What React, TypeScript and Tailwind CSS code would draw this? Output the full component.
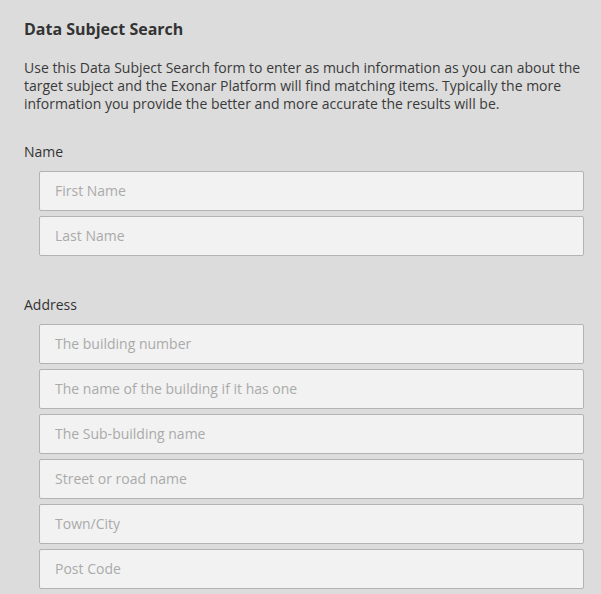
import React from "react";

const inputCls =
  "block w-full h-[40px] rounded-[2px] border border-[#b3b3b3] bg-[#f2f2f2] pl-[15px] pb-[2px] text-[14px] text-[#555] placeholder:text-[#aaaaaa] outline-none";

export default function App() {
  const font = { fontFamily: '"Open Sans", sans-serif' };
  return (
    <div className="min-h-[594px] w-[601px] bg-[#dcdcdc] pl-[24px] pr-[17px] pt-[18px] text-[#333]" style={font}>
      <h1 className="text-[16px] font-bold leading-[22px] text-[#333]">Data Subject Search</h1>
      <p className="mt-[19px] text-[14px] leading-[18px] text-[#3a3a3a]">
        Use this Data Subject Search form to enter as much information as you can about the target subject and the Exonar Platform will find matching items. Typically the more information you provide the better and more accurate the results will be.
      </p>
      <div className="mt-[30px]">
        <label className="block text-[14px] leading-[18px] text-[#333]">Name</label>
        <div className="mt-[10px] flex flex-col gap-[5px] pl-[15px]">
          <input className={inputCls} placeholder="First Name" />
          <input className={inputCls} placeholder="Last Name" />
        </div>
      </div>
      <div className="mt-[40px]">
        <label className="block text-[14px] leading-[18px] text-[#333]">Address</label>
        <div className="mt-[10px] flex flex-col gap-[5px] pl-[15px]">
          <input className={inputCls} placeholder="The building number" />
          <input className={inputCls} placeholder="The name of the building if it has one" />
          <input className={inputCls} placeholder="The Sub-building name" />
          <input className={inputCls} placeholder="Street or road name" />
          <input className={inputCls} placeholder="Town/City" />
          <input className={inputCls} placeholder="Post Code" />
        </div>
      </div>
    </div>
  );
}
